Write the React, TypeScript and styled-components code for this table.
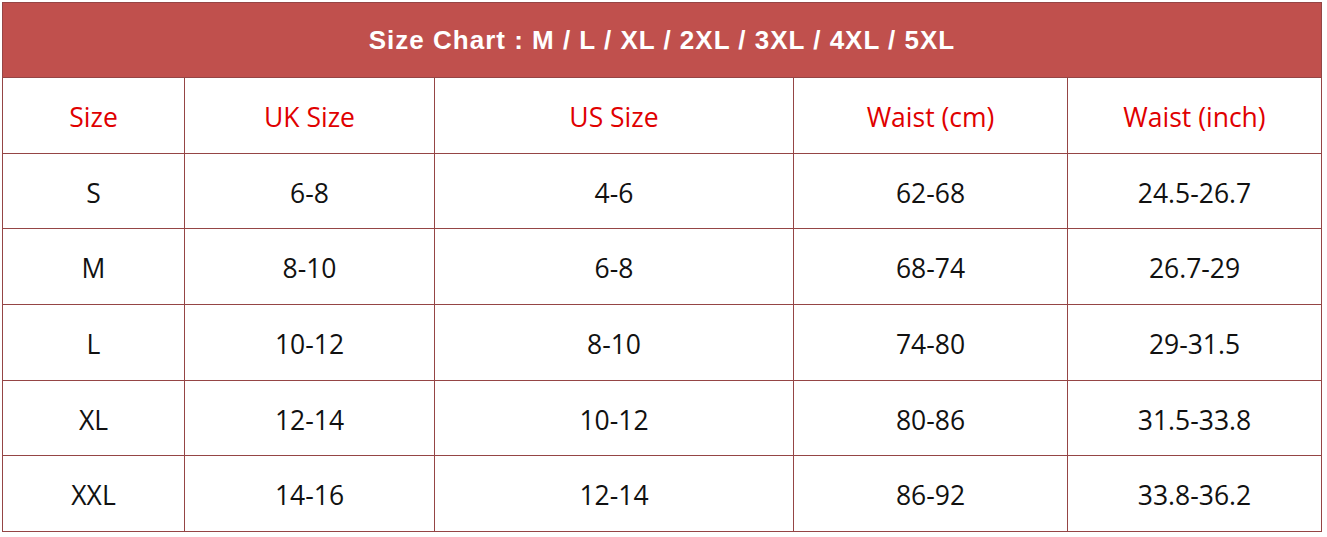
import React from 'react'
import styled, { createGlobalStyle } from 'styled-components'

const GlobalStyle = createGlobalStyle`
  html, body {
    margin: 0;
    padding: 0;
    background: #ffffff;
  }
`

// --- Styled Components ---
const Page = styled.div`
  padding: 2px 0 0 2px;
`

const Chart = styled.div`
  width: 1320px;
  box-sizing: border-box;
  border: 1px solid #954545;
  border-right: none;
`

const Title = styled.div`
  height: 74px;
  background-color: #c0504d;
  color: #ffffff;
  font-family: 'Liberation Sans', Arial, sans-serif;
  font-weight: 700;
  font-size: 26px;
  letter-spacing: 1px;
  display: flex;
  align-items: center;
  justify-content: center;
  border-right: 1px solid #954545;
  box-sizing: border-box;
`

const Grid = styled.div`
  display: grid;
  grid-template-columns: 182px 250px 359px 274px 254px;
  grid-auto-rows: 75.7px;
`

const Cell = styled.div<{ $head?: boolean }>`
  display: flex;
  align-items: center;
  justify-content: center;
  box-sizing: border-box;
  padding-top: 3px;
  border-top: 1px solid #954545;
  border-right: 1px solid #954545;
  font-family: 'Open Sans', 'Noto Sans', sans-serif;
  font-size: 26.5px;
  color: ${(props) => (props.$head ? '#e00000' : '#111111')};
`

const headers = ['Size', 'UK Size', 'US Size', 'Waist (cm)', 'Waist (inch)']

const rows = [
  ['S', '6-8', '4-6', '62-68', '24.5-26.7'],
  ['M', '8-10', '6-8', '68-74', '26.7-29'],
  ['L', '10-12', '8-10', '74-80', '29-31.5'],
  ['XL', '12-14', '10-12', '80-86', '31.5-33.8'],
  ['XXL', '14-16', '12-14', '86-92', '33.8-36.2'],
]

export default function App() {
  return (
    <Page>
      <GlobalStyle />
      <Chart>
        <Title>Size Chart : M / L / XL / 2XL / 3XL / 4XL / 5XL</Title>
        <Grid>
          {headers.map((h) => (
            <Cell key={h} $head>
              {h}
            </Cell>
          ))}
          {rows.map((row) =>
            row.map((value, i) => <Cell key={row[0] + i}>{value}</Cell>)
          )}
        </Grid>
      </Chart>
    </Page>
  )
}
